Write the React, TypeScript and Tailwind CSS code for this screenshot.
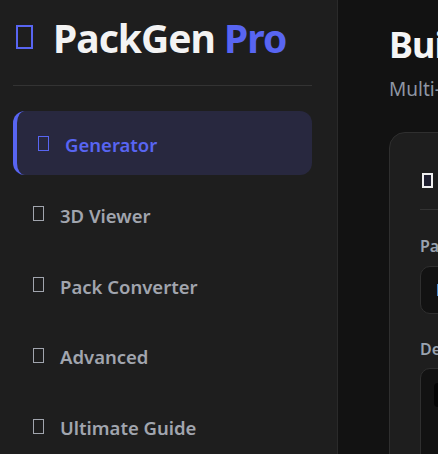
import React from "react";

const font = { fontFamily: '"Noto Sans", "Open Sans", sans-serif' };

// Missing-glyph boxes used where the emoji icons sit
function Glyph({ className }: { className: string }) {
    return <span className={"inline-block shrink-0 " + className} />;
}

const navItems = ["Generator", "3D Viewer", "Pack Converter", "Advanced", "Ultimate Guide"];

function Sidebar() {
    return (
        <aside className="w-[338px] shrink-0 h-full bg-[#1e1e1e] border-r border-[#2a2a2a] pl-[13px] pr-[25px] pt-[12px]">
            <div className="flex items-center h-[50px] pl-[3px]">
                <Glyph className="w-[17px] h-[24px] border-[2.5px] border-[#5865f2]" />
                <span className="ml-[20px] text-[39px] font-bold text-[#f3f3f3] leading-none tracking-tight">
                    PackGen <span className="text-[#5865f2]">Pro</span>
                </span>
            </div>
            <div className="h-px bg-[#333333] mt-[23px]" />
            <nav className="mt-[25px] flex flex-col gap-[6.75px]">
                {navItems.map((item, i) =>
                    i === 0 ? (
                        <div
                            key={item}
                            className="h-[64px] flex items-center rounded-xl bg-[#28283f] border-l-[4px] border-[#5865f2] pl-[21px] text-[#5865f2]"
                        >
                            <Glyph className="w-[11px] h-[15px] border-[1.5px] border-[#5865f2]" />
                            <span className="ml-[16px] mt-[4px] text-[18.5px] font-semibold">{item}</span>
                        </div>
                    ) : (
                        <div key={item} className="h-[64px] flex items-center pl-[20px] text-[#a1a5ae]">
                            <Glyph className="w-[11px] h-[15px] border-[1.5px] border-[#a1a5ae]" />
                            <span className="ml-[16px] mt-[4px] text-[18.5px] font-semibold">{item}</span>
                        </div>
                    )
                )}
            </nav>
        </aside>
    );
}

function Main() {
    return (
        <main className="flex-1 h-full bg-[#121212] pl-[51px] pt-[25px] overflow-hidden">
            <h1 className="text-[36px] leading-[40px] font-bold tracking-tight text-[#f5f5f5] whitespace-nowrap">
                Build Your Resource Pack
            </h1>
            <p className="mt-[12px] text-[19px] leading-[25px] text-[#8e96a3] whitespace-nowrap">
                Multi-version Minecraft resource pack generator
            </p>
            <section className="mt-[30px] w-[720px] rounded-2xl bg-[#1e1e1e] border border-[#2f2f2f] p-[30px]">
                <div className="flex items-center h-[34px] pl-[2px]">
                    <Glyph className="w-[11px] h-[15px] border-[2px] border-[#f0f0f0] bg-[#202030]" />
                    <span className="ml-[12px] text-[20px] font-semibold text-[#f3f3f3]">Pack Details</span>
                </div>
                <div className="h-px bg-[#333333] mt-[12px]" />
                <div className="mt-[25px]">
                    <label className="block text-[16px] leading-[22px] font-semibold text-[#9aa3b0]">Pack Name</label>
                    <div className="mt-[9px] h-[48px] rounded-[10px] bg-[#121212] border border-[#2f2f2f] flex items-center pl-[15px] text-[16px] text-[#e5e7eb]">
                        My Awesome Pack
                    </div>
                </div>
                <div className="mt-[24px]">
                    <label className="block text-[16px] leading-[22px] font-semibold text-[#9aa3b0]">Description</label>
                    <div className="mt-[8px] h-[120px] rounded-[10px] bg-[#121212] border border-[#2f2f2f] pt-[14px] pl-[13px]">
                        <div className="h-[24px] w-[300px] rounded-sm bg-[#050505]" />
                    </div>
                </div>
            </section>
        </main>
    );
}

export default function App() {
    return (
        <div className="flex h-[454px] w-full overflow-hidden" style={font}>
            <Sidebar />
            <Main />
        </div>
    );
}
